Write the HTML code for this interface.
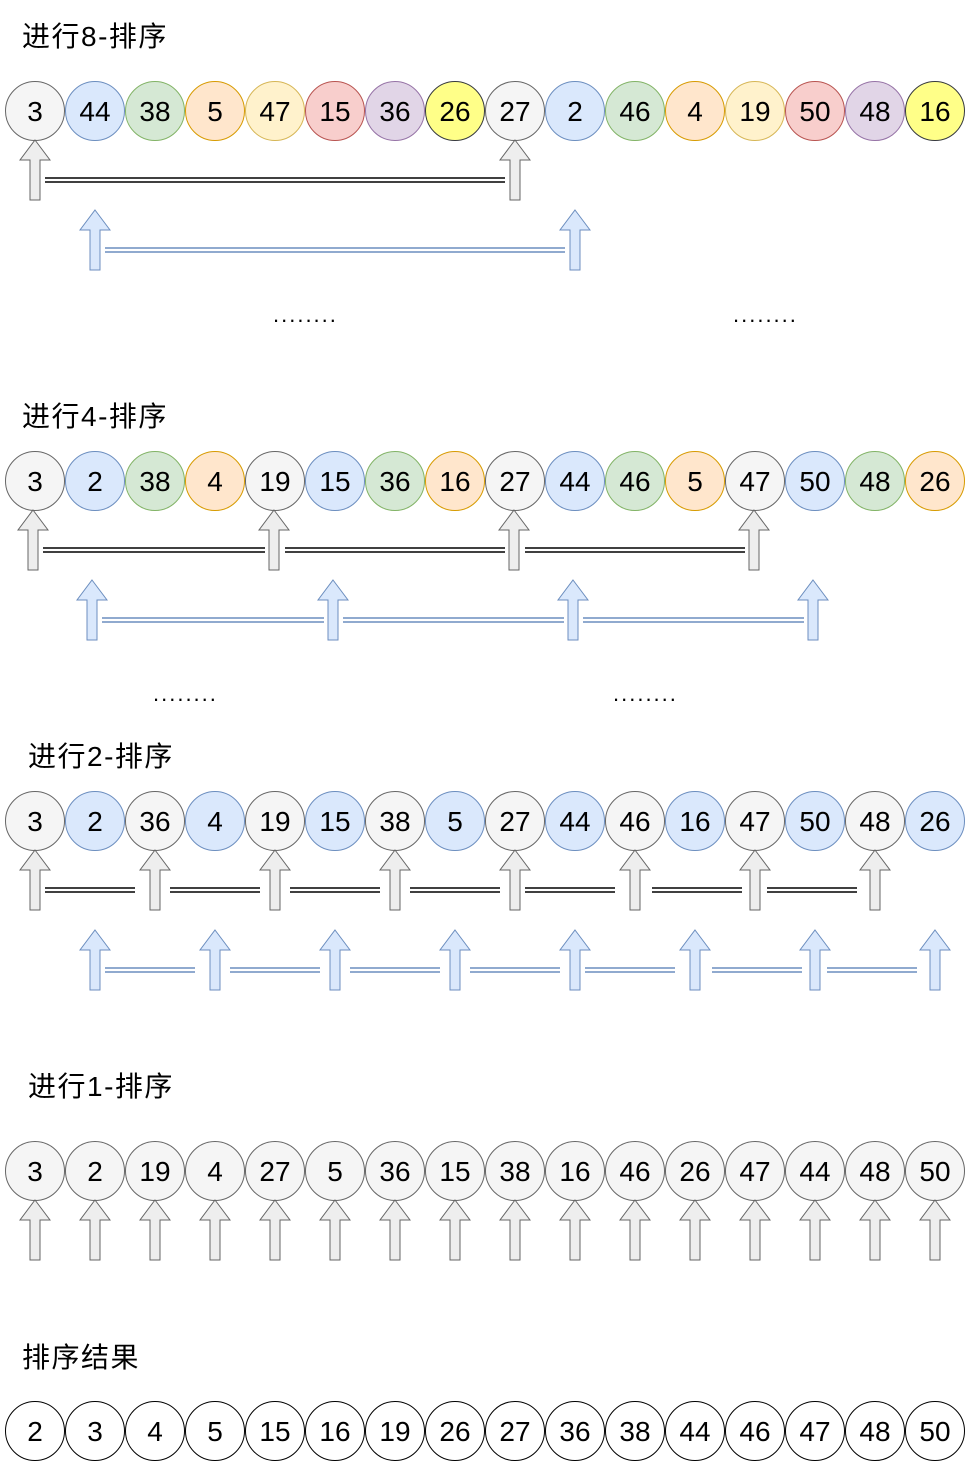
<!DOCTYPE html>
<html><head><meta charset="utf-8"><style>
html,body{margin:0;padding:0;background:#fff;}
svg{display:block;}
text{font-family:"Liberation Sans","Noto Sans CJK SC",sans-serif;}
.n{font-size:28px;text-anchor:middle;fill:#000;}
.t{font-size:28px;fill:#000;letter-spacing:1.5px;}
.d{font-size:22px;fill:#000;letter-spacing:2px;}
.g{fill:#f5f5f5;stroke:#666;}
.b{fill:#dae8fc;stroke:#6c8ebf;}
.gr{fill:#d5e8d4;stroke:#82b366;}
.o{fill:#ffe6cc;stroke:#d79b00;}
.yl{fill:#fff2cc;stroke:#d6b656;}
.r{fill:#f8cecc;stroke:#b85450;}
.p{fill:#e1d5e7;stroke:#9673a6;}
.y{fill:#ffff88;stroke:#36393d;}
.w{fill:#fff;stroke:#000;}
.ls{stroke:#000;stroke-width:1.5;}
.lb{stroke:#6c8ebf;stroke-width:1.5;}
</style></head><body>
<svg width="966" height="1461" viewBox="0 0 966 1461" xmlns="http://www.w3.org/2000/svg">
<defs>
<path id="ga" d="M0,0 L15,20 L5,20 L5,60 L-5,60 L-5,20 L-15,20 Z" fill="#eeeeee" stroke="#666" stroke-width="1"/>
<path id="ba" d="M0,0 L15,20 L5,20 L5,60 L-5,60 L-5,20 L-15,20 Z" fill="#dae8fc" stroke="#6c8ebf" stroke-width="1"/>
</defs>

<text class="t" x="22" y="46">进行8-排序</text>
<g>
<circle class="g" cx="35" cy="111" r="29.5"/><text class="n" x="35" y="121">3</text>
<circle class="b" cx="95" cy="111" r="29.5"/><text class="n" x="95" y="121">44</text>
<circle class="gr" cx="155" cy="111" r="29.5"/><text class="n" x="155" y="121">38</text>
<circle class="o" cx="215" cy="111" r="29.5"/><text class="n" x="215" y="121">5</text>
<circle class="yl" cx="275" cy="111" r="29.5"/><text class="n" x="275" y="121">47</text>
<circle class="r" cx="335" cy="111" r="29.5"/><text class="n" x="335" y="121">15</text>
<circle class="p" cx="395" cy="111" r="29.5"/><text class="n" x="395" y="121">36</text>
<circle class="y" cx="455" cy="111" r="29.5"/><text class="n" x="455" y="121">26</text>
<circle class="g" cx="515" cy="111" r="29.5"/><text class="n" x="515" y="121">27</text>
<circle class="b" cx="575" cy="111" r="29.5"/><text class="n" x="575" y="121">2</text>
<circle class="gr" cx="635" cy="111" r="29.5"/><text class="n" x="635" y="121">46</text>
<circle class="o" cx="695" cy="111" r="29.5"/><text class="n" x="695" y="121">4</text>
<circle class="yl" cx="755" cy="111" r="29.5"/><text class="n" x="755" y="121">19</text>
<circle class="r" cx="815" cy="111" r="29.5"/><text class="n" x="815" y="121">50</text>
<circle class="p" cx="875" cy="111" r="29.5"/><text class="n" x="875" y="121">48</text>
<circle class="y" cx="935" cy="111" r="29.5"/><text class="n" x="935" y="121">16</text>
</g>
<use href="#ga" x="35" y="140"/><use href="#ga" x="515" y="140"/>
<line class="ls" x1="45" y1="178" x2="505" y2="178"/><line class="ls" x1="45" y1="182" x2="505" y2="182"/>
<use href="#ba" x="95" y="210"/><use href="#ba" x="575" y="210"/>
<line class="lb" x1="105" y1="248" x2="565" y2="248"/><line class="lb" x1="105" y1="252" x2="565" y2="252"/>
<text class="d" x="273" y="322">........</text><text class="d" x="733" y="322">........</text>

<text class="t" x="22" y="426">进行4-排序</text>
<g>
<circle class="g" cx="35" cy="481" r="29.5"/><text class="n" x="35" y="491">3</text>
<circle class="b" cx="95" cy="481" r="29.5"/><text class="n" x="95" y="491">2</text>
<circle class="gr" cx="155" cy="481" r="29.5"/><text class="n" x="155" y="491">38</text>
<circle class="o" cx="215" cy="481" r="29.5"/><text class="n" x="215" y="491">4</text>
<circle class="g" cx="275" cy="481" r="29.5"/><text class="n" x="275" y="491">19</text>
<circle class="b" cx="335" cy="481" r="29.5"/><text class="n" x="335" y="491">15</text>
<circle class="gr" cx="395" cy="481" r="29.5"/><text class="n" x="395" y="491">36</text>
<circle class="o" cx="455" cy="481" r="29.5"/><text class="n" x="455" y="491">16</text>
<circle class="g" cx="515" cy="481" r="29.5"/><text class="n" x="515" y="491">27</text>
<circle class="b" cx="575" cy="481" r="29.5"/><text class="n" x="575" y="491">44</text>
<circle class="gr" cx="635" cy="481" r="29.5"/><text class="n" x="635" y="491">46</text>
<circle class="o" cx="695" cy="481" r="29.5"/><text class="n" x="695" y="491">5</text>
<circle class="g" cx="755" cy="481" r="29.5"/><text class="n" x="755" y="491">47</text>
<circle class="b" cx="815" cy="481" r="29.5"/><text class="n" x="815" y="491">50</text>
<circle class="gr" cx="875" cy="481" r="29.5"/><text class="n" x="875" y="491">48</text>
<circle class="o" cx="935" cy="481" r="29.5"/><text class="n" x="935" y="491">26</text>
</g>
<use href="#ga" x="33" y="510"/><use href="#ga" x="274" y="510"/><use href="#ga" x="514" y="510"/><use href="#ga" x="754" y="510"/>
<g class="ls">
<line x1="43" y1="548" x2="265" y2="548"/><line x1="43" y1="552" x2="265" y2="552"/>
<line x1="285" y1="548" x2="505" y2="548"/><line x1="285" y1="552" x2="505" y2="552"/>
<line x1="525" y1="548" x2="745" y2="548"/><line x1="525" y1="552" x2="745" y2="552"/>
</g>
<use href="#ba" x="92" y="580"/><use href="#ba" x="333" y="580"/><use href="#ba" x="573" y="580"/><use href="#ba" x="813" y="580"/>
<g class="lb">
<line x1="102" y1="618" x2="324" y2="618"/><line x1="102" y1="622" x2="324" y2="622"/>
<line x1="343" y1="618" x2="564" y2="618"/><line x1="343" y1="622" x2="564" y2="622"/>
<line x1="583" y1="618" x2="804" y2="618"/><line x1="583" y1="622" x2="804" y2="622"/>
</g>
<text class="d" x="153" y="701">........</text><text class="d" x="613" y="701">........</text>

<text class="t" x="28" y="766">进行2-排序</text>
<g>
<circle class="g" cx="35" cy="821" r="29.5"/><text class="n" x="35" y="831">3</text>
<circle class="b" cx="95" cy="821" r="29.5"/><text class="n" x="95" y="831">2</text>
<circle class="g" cx="155" cy="821" r="29.5"/><text class="n" x="155" y="831">36</text>
<circle class="b" cx="215" cy="821" r="29.5"/><text class="n" x="215" y="831">4</text>
<circle class="g" cx="275" cy="821" r="29.5"/><text class="n" x="275" y="831">19</text>
<circle class="b" cx="335" cy="821" r="29.5"/><text class="n" x="335" y="831">15</text>
<circle class="g" cx="395" cy="821" r="29.5"/><text class="n" x="395" y="831">38</text>
<circle class="b" cx="455" cy="821" r="29.5"/><text class="n" x="455" y="831">5</text>
<circle class="g" cx="515" cy="821" r="29.5"/><text class="n" x="515" y="831">27</text>
<circle class="b" cx="575" cy="821" r="29.5"/><text class="n" x="575" y="831">44</text>
<circle class="g" cx="635" cy="821" r="29.5"/><text class="n" x="635" y="831">46</text>
<circle class="b" cx="695" cy="821" r="29.5"/><text class="n" x="695" y="831">16</text>
<circle class="g" cx="755" cy="821" r="29.5"/><text class="n" x="755" y="831">47</text>
<circle class="b" cx="815" cy="821" r="29.5"/><text class="n" x="815" y="831">50</text>
<circle class="g" cx="875" cy="821" r="29.5"/><text class="n" x="875" y="831">48</text>
<circle class="b" cx="935" cy="821" r="29.5"/><text class="n" x="935" y="831">26</text>
</g>
<use href="#ga" x="35" y="850"/><use href="#ga" x="155" y="850"/><use href="#ga" x="275" y="850"/><use href="#ga" x="395" y="850"/><use href="#ga" x="515" y="850"/><use href="#ga" x="635" y="850"/><use href="#ga" x="755" y="850"/><use href="#ga" x="875" y="850"/>
<g class="ls">
<line x1="45" y1="888" x2="135" y2="888"/><line x1="45" y1="892" x2="135" y2="892"/>
<line x1="170" y1="888" x2="260" y2="888"/><line x1="170" y1="892" x2="260" y2="892"/>
<line x1="290" y1="888" x2="380" y2="888"/><line x1="290" y1="892" x2="380" y2="892"/>
<line x1="410" y1="888" x2="500" y2="888"/><line x1="410" y1="892" x2="500" y2="892"/>
<line x1="525" y1="888" x2="615" y2="888"/><line x1="525" y1="892" x2="615" y2="892"/>
<line x1="652" y1="888" x2="742" y2="888"/><line x1="652" y1="892" x2="742" y2="892"/>
<line x1="767" y1="888" x2="857" y2="888"/><line x1="767" y1="892" x2="857" y2="892"/>
</g>
<use href="#ba" x="95" y="930"/><use href="#ba" x="215" y="930"/><use href="#ba" x="335" y="930"/><use href="#ba" x="455" y="930"/><use href="#ba" x="575" y="930"/><use href="#ba" x="695" y="930"/><use href="#ba" x="815" y="930"/><use href="#ba" x="935" y="930"/>
<g class="lb">
<line x1="105" y1="968" x2="195" y2="968"/><line x1="105" y1="972" x2="195" y2="972"/>
<line x1="230" y1="968" x2="320" y2="968"/><line x1="230" y1="972" x2="320" y2="972"/>
<line x1="350" y1="968" x2="440" y2="968"/><line x1="350" y1="972" x2="440" y2="972"/>
<line x1="470" y1="968" x2="560" y2="968"/><line x1="470" y1="972" x2="560" y2="972"/>
<line x1="585" y1="968" x2="675" y2="968"/><line x1="585" y1="972" x2="675" y2="972"/>
<line x1="712" y1="968" x2="802" y2="968"/><line x1="712" y1="972" x2="802" y2="972"/>
<line x1="827" y1="968" x2="917" y2="968"/><line x1="827" y1="972" x2="917" y2="972"/>
</g>

<text class="t" x="28" y="1096">进行1-排序</text>
<g>
<circle class="g" cx="35" cy="1171" r="29.5"/><text class="n" x="35" y="1181">3</text>
<circle class="g" cx="95" cy="1171" r="29.5"/><text class="n" x="95" y="1181">2</text>
<circle class="g" cx="155" cy="1171" r="29.5"/><text class="n" x="155" y="1181">19</text>
<circle class="g" cx="215" cy="1171" r="29.5"/><text class="n" x="215" y="1181">4</text>
<circle class="g" cx="275" cy="1171" r="29.5"/><text class="n" x="275" y="1181">27</text>
<circle class="g" cx="335" cy="1171" r="29.5"/><text class="n" x="335" y="1181">5</text>
<circle class="g" cx="395" cy="1171" r="29.5"/><text class="n" x="395" y="1181">36</text>
<circle class="g" cx="455" cy="1171" r="29.5"/><text class="n" x="455" y="1181">15</text>
<circle class="g" cx="515" cy="1171" r="29.5"/><text class="n" x="515" y="1181">38</text>
<circle class="g" cx="575" cy="1171" r="29.5"/><text class="n" x="575" y="1181">16</text>
<circle class="g" cx="635" cy="1171" r="29.5"/><text class="n" x="635" y="1181">46</text>
<circle class="g" cx="695" cy="1171" r="29.5"/><text class="n" x="695" y="1181">26</text>
<circle class="g" cx="755" cy="1171" r="29.5"/><text class="n" x="755" y="1181">47</text>
<circle class="g" cx="815" cy="1171" r="29.5"/><text class="n" x="815" y="1181">44</text>
<circle class="g" cx="875" cy="1171" r="29.5"/><text class="n" x="875" y="1181">48</text>
<circle class="g" cx="935" cy="1171" r="29.5"/><text class="n" x="935" y="1181">50</text>
</g>
<use href="#ga" x="35" y="1200"/><use href="#ga" x="95" y="1200"/><use href="#ga" x="155" y="1200"/><use href="#ga" x="215" y="1200"/><use href="#ga" x="275" y="1200"/><use href="#ga" x="335" y="1200"/><use href="#ga" x="395" y="1200"/><use href="#ga" x="455" y="1200"/><use href="#ga" x="515" y="1200"/><use href="#ga" x="575" y="1200"/><use href="#ga" x="635" y="1200"/><use href="#ga" x="695" y="1200"/><use href="#ga" x="755" y="1200"/><use href="#ga" x="815" y="1200"/><use href="#ga" x="875" y="1200"/><use href="#ga" x="935" y="1200"/>

<text class="t" x="22" y="1367">排序结果</text>
<g>
<circle class="w" cx="35" cy="1431" r="29.5"/><text class="n" x="35" y="1441">2</text>
<circle class="w" cx="95" cy="1431" r="29.5"/><text class="n" x="95" y="1441">3</text>
<circle class="w" cx="155" cy="1431" r="29.5"/><text class="n" x="155" y="1441">4</text>
<circle class="w" cx="215" cy="1431" r="29.5"/><text class="n" x="215" y="1441">5</text>
<circle class="w" cx="275" cy="1431" r="29.5"/><text class="n" x="275" y="1441">15</text>
<circle class="w" cx="335" cy="1431" r="29.5"/><text class="n" x="335" y="1441">16</text>
<circle class="w" cx="395" cy="1431" r="29.5"/><text class="n" x="395" y="1441">19</text>
<circle class="w" cx="455" cy="1431" r="29.5"/><text class="n" x="455" y="1441">26</text>
<circle class="w" cx="515" cy="1431" r="29.5"/><text class="n" x="515" y="1441">27</text>
<circle class="w" cx="575" cy="1431" r="29.5"/><text class="n" x="575" y="1441">36</text>
<circle class="w" cx="635" cy="1431" r="29.5"/><text class="n" x="635" y="1441">38</text>
<circle class="w" cx="695" cy="1431" r="29.5"/><text class="n" x="695" y="1441">44</text>
<circle class="w" cx="755" cy="1431" r="29.5"/><text class="n" x="755" y="1441">46</text>
<circle class="w" cx="815" cy="1431" r="29.5"/><text class="n" x="815" y="1441">47</text>
<circle class="w" cx="875" cy="1431" r="29.5"/><text class="n" x="875" y="1441">48</text>
<circle class="w" cx="935" cy="1431" r="29.5"/><text class="n" x="935" y="1441">50</text>
</g>
</svg>
</body></html>
